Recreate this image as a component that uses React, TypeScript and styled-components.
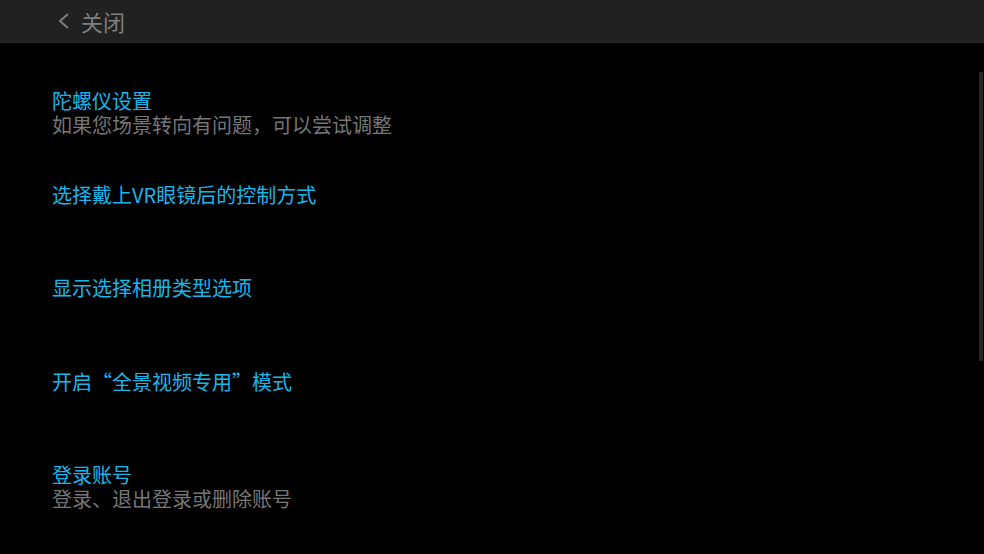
import * as React from 'react';
import styled, { createGlobalStyle } from 'styled-components';

const GlobalStyle = createGlobalStyle`
  html, body {
    margin: 0;
    padding: 0;
    background: #000;
    height: 100%;
    overflow: hidden;
  }
  #root {
    height: 100%;
  }
`;

const Screen = styled.div`
  position: relative;
  width: 984px;
  height: 554px;
  background: #000;
  font-family: 'Noto Sans CJK SC', 'Noto Sans', sans-serif;
  display: flex;
  flex-direction: column;
  overflow: hidden;
`;

const TopBar = styled.div`
  height: 42px;
  flex-shrink: 0;
  display: flex;
  align-items: center;
  padding-left: 56px;
  gap: 11px;
  background: #212121;
  border-bottom: 1px solid #2b2b2b;
`;

const CloseLabel = styled.span`
  font-size: 22px;
  line-height: 42px;
  color: #7e7e7e;
`;

const List = styled.div`
  display: flex;
  flex-direction: column;
  padding: 46px 0 0 52px;
`;

const Item = styled.div`
  height: 93.5px;
  display: flex;
  flex-direction: column;
`;

const Title = styled.div`
  font-size: 20px;
  line-height: 24px;
  color: #18b6ea;
`;

const Subtitle = styled.div`
  font-size: 20px;
  line-height: 24px;
  color: #767676;
`;

const ScrollThumb = styled.div`
  position: absolute;
  right: 1px;
  top: 72px;
  width: 4px;
  height: 289px;
  background: #262626;
`;

const items = [
  { title: '陀螺仪设置', sub: '如果您场景转向有问题，可以尝试调整' },
  { title: '选择戴上VR眼镜后的控制方式' },
  { title: '显示选择相册类型选项' },
  { title: '开启“全景视频专用”模式' },
  { title: '登录账号', sub: '登录、退出登录或删除账号' },
];

const App = () => (
  <>
    <GlobalStyle />
    <Screen>
      <TopBar>
        <svg width="14" height="20" viewBox="0 0 14 20">
          <path d="M12 3 L4 10 L12 17" fill="none" stroke="#7e7e7e" strokeWidth="2" />
        </svg>
        <CloseLabel>关闭</CloseLabel>
      </TopBar>
      <List>
        {items.map((item) => (
          <Item key={item.title}>
            <Title>{item.title}</Title>
            {item.sub && <Subtitle>{item.sub}</Subtitle>}
          </Item>
        ))}
      </List>
      <ScrollThumb />
    </Screen>
  </>
);

export default App;
